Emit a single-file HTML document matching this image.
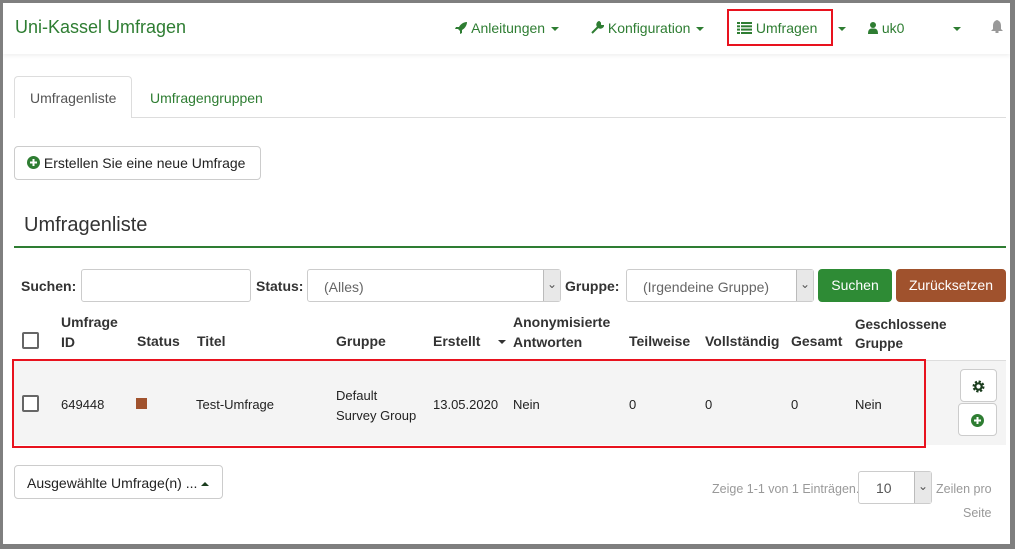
<!DOCTYPE html>
<html><head><meta charset="utf-8"><style>
*{box-sizing:border-box;margin:0;padding:0}
body{width:1015px;height:549px;background:#7f7f7f;font-family:"Liberation Sans",sans-serif;font-size:13px;color:#222;position:relative;overflow:hidden}
#pg{position:absolute;left:3px;top:3px;width:1007px;height:541px;background:#fff;overflow:hidden}
.a{position:absolute;white-space:nowrap}
.g{color:#2e7d32}
.nav{position:absolute;left:0;top:0;width:1007px;height:51px;background:#fff;box-shadow:0 2px 4px rgba(0,0,0,.06)}
.car{display:inline-block;width:0;height:0;border-left:4px solid transparent;border-right:4px solid transparent;border-top:4px solid #2e7d32;vertical-align:middle;margin-left:6px}
.tc{position:absolute;width:0;height:0;border-left:4px solid transparent;border-right:4px solid transparent;border-top:4px solid #2e7d32}
.inp{position:absolute;border:1px solid #ccc;border-radius:3px;background:#fff;height:33px}
.sel .ar{position:absolute;right:0;top:0;width:17px;height:31px;background:#e8e8e8;border-left:1px solid #bbb;font-size:12px;color:#555;text-align:center;line-height:28px}
.b{font-weight:bold;color:#333;font-size:14px}
.btn{position:absolute;border:1px solid #ccc;border-radius:4px;background:#fff}
</style></head><body>
<div id="pg">
<div class="nav">
 <div class="a g" style="left:12px;top:14px;font-size:18px">Uni-Kassel Umfragen</div>
 <div class="a g" style="left:452px;top:17px;font-size:14px"><svg width="13" height="12" viewBox="0 0 13 12" style="vertical-align:-1px"><path d="M12 0C8 0 5 3 4 5L1 5 0 7 3 7 5 9 5 12 7 11 7 8C9 7 12 4 12 0Z" fill="#2e7d32"/></svg> Anleitungen<span class="car"></span></div>
 <div class="a g" style="left:588px;top:17px;font-size:14px"><svg width="13" height="13" viewBox="0 0 13 13" style="vertical-align:-1px"><path d="M1 12L7 6M8 1a3 3 0 1 0 4 4l-2 0-1-1 0-2z" stroke="#2e7d32" stroke-width="2" fill="#2e7d32"/></svg> Konfiguration<span class="car"></span></div>
 <div class="a" style="left:724px;top:6px;width:106px;height:37px;border:2px solid #e8121e"></div>
 <div class="a g" style="left:734px;top:17px;font-size:14px"><svg width="15" height="12" viewBox="0 0 15 12" style="vertical-align:-1px"><g fill="#2e7d32"><rect x="0" y="0" width="3" height="2"/><rect x="4" y="0" width="11" height="2"/><rect x="0" y="3.3" width="3" height="2"/><rect x="4" y="3.3" width="11" height="2"/><rect x="0" y="6.6" width="3" height="2"/><rect x="4" y="6.6" width="11" height="2"/><rect x="0" y="10" width="3" height="2"/><rect x="4" y="10" width="11" height="2"/></g></svg> Umfragen</div>
 <div class="tc" style="left:835px;top:24px"></div>
 <div class="a g" style="left:865px;top:17px;font-size:14px"><svg width="10" height="12" viewBox="0 0 10 12" style="vertical-align:-1px"><circle cx="5" cy="3" r="3" fill="#2e7d32"/><path d="M0 12C0 7 2 6.5 5 6.5S10 7 10 12Z" fill="#2e7d32"/></svg> uk0</div>
 <div class="tc" style="left:950px;top:24px"></div>
 <div class="a" style="left:988px;top:17px"><svg width="12" height="13" viewBox="0 0 12 13"><path d="M6 0C3 1 2 3 2 6L2 9 0 11 12 11 10 9 10 6C10 3 9 1 6 0Z" fill="#999"/><rect x="4.5" y="11" width="3" height="2" fill="#999"/></svg></div>
</div>
<div class="a" style="left:11px;top:114px;width:992px;height:1px;background:#ddd"></div>
<div class="a" style="left:11px;top:73px;width:118px;height:42px;border:1px solid #ddd;border-bottom:none;border-radius:4px 4px 0 0;background:#fff"></div>
<div class="a" style="left:27px;top:87px;color:#555;font-size:14px">Umfragenliste</div>
<div class="a g" style="left:147px;top:87px;font-size:14px">Umfragengruppen</div>
<div class="btn" style="left:11px;top:143px;width:247px;height:34px"></div>
<div class="a" style="left:24px;top:152px;font-size:14px;color:#222"><svg width="13" height="13" viewBox="0 0 13 13" style="vertical-align:-1px"><circle cx="6.5" cy="6.5" r="6.5" fill="#2e7d32"/><path d="M6.5 3v7M3 6.5h7" stroke="#fff" stroke-width="2"/></svg> Erstellen Sie eine neue Umfrage</div>
<div class="a" style="left:21px;top:211px;font-size:20px;color:#333">Umfragenliste</div>
<div class="a" style="left:11px;top:243px;width:992px;height:2px;background:#2e7d32"></div>
<div class="a b" style="left:18px;top:275px">Suchen:</div>
<div class="inp" style="left:78px;top:266px;width:170px"></div>
<div class="a b" style="left:253px;top:275px">Status:</div>
<div class="inp sel" style="left:304px;top:266px;width:254px"><span class="a" style="left:16px;top:9px;color:#666;font-size:14px">(Alles)</span><span class="ar">&#8964;</span></div>
<div class="a b" style="left:562px;top:275px">Gruppe:</div>
<div class="inp sel" style="left:623px;top:266px;width:188px"><span class="a" style="left:16px;top:9px;color:#666;font-size:14px">(Irgendeine Gruppe)</span><span class="ar">&#8964;</span></div>
<div class="a" style="left:815px;top:266px;width:74px;height:33px;background:#2e8b35;border-radius:4px;color:#fff;font-size:14px;text-align:center;line-height:33px">Suchen</div>
<div class="a" style="left:893px;top:266px;width:110px;height:33px;background:#a0522d;border-radius:4px;color:#fff;font-size:14px;text-align:center;line-height:33px">Zurücksetzen</div>
<div class="a" style="left:19px;top:329px;width:17px;height:17px;border:2px solid #666;border-radius:2px"></div>
<div class="a b" style="left:58px;top:309px;line-height:20px">Umfrage<br>ID</div>
<div class="a b" style="left:134px;top:330px">Status</div>
<div class="a b" style="left:194px;top:330px">Titel</div>
<div class="a b" style="left:333px;top:330px">Gruppe</div>
<div class="a b" style="left:430px;top:330px">Erstellt</div>
<div class="a" style="left:495px;top:337px;border-left:4px solid transparent;border-right:4px solid transparent;border-top:4px solid #333"></div>
<div class="a b" style="left:510px;top:309px;line-height:20px">Anonymisierte<br>Antworten</div>
<div class="a b" style="left:626px;top:330px">Teilweise</div>
<div class="a b" style="left:702px;top:330px">Vollständig</div>
<div class="a b" style="left:788px;top:330px">Gesamt</div>
<div class="a b" style="left:852px;top:312px;line-height:19px;font-size:13.5px">Geschlossene<br>Gruppe</div>
<div class="a" style="left:11px;top:357px;width:992px;height:1px;background:#ddd"></div>
<div class="a" style="left:11px;top:358px;width:992px;height:84px;background:#f4f4f4"></div>
<div class="a" style="left:9px;top:356px;width:914px;height:89px;border:2px solid #e8121e"></div>
<div class="a" style="left:19px;top:392px;width:17px;height:17px;border:2px solid #666;border-radius:2px;background:#fff"></div>
<div class="a" style="left:58px;top:394px">649448</div>
<div class="a" style="left:133px;top:395px;width:11px;height:11px;background:#a0522d"></div>
<div class="a" style="left:193px;top:394px">Test-Umfrage</div>
<div class="a" style="left:333px;top:383px;line-height:20px">Default<br>Survey Group</div>
<div class="a" style="left:430px;top:394px">13.05.2020</div>
<div class="a" style="left:510px;top:394px">Nein</div>
<div class="a" style="left:626px;top:394px">0</div>
<div class="a" style="left:702px;top:394px">0</div>
<div class="a" style="left:788px;top:394px">0</div>
<div class="a" style="left:852px;top:394px">Nein</div>
<div class="btn" style="left:957px;top:366px;width:37px;height:33px;text-align:center;line-height:33px"><svg width="13" height="13" viewBox="0 0 13 13" style="vertical-align:-2px"><circle cx="6.5" cy="6.5" r="4.5" fill="none" stroke="#1b3d1e" stroke-width="3" stroke-dasharray="2 1.53"/><circle cx="6.5" cy="6.5" r="3.2" fill="none" stroke="#1b3d1e" stroke-width="2.2"/></svg></div>
<div class="btn" style="left:955px;top:400px;width:39px;height:33px;text-align:center;line-height:33px"><svg width="13" height="13" viewBox="0 0 13 13" style="vertical-align:-2px"><circle cx="6.5" cy="6.5" r="6.5" fill="#2e7d32"/><path d="M6.5 3v7M3 6.5h7" stroke="#fff" stroke-width="2"/></svg></div>
<div class="btn" style="left:11px;top:462px;width:209px;height:34px"></div>
<div class="a" style="left:24px;top:472px;font-size:14px">Ausgewählte Umfrage(n) ... <span style="display:inline-block;border-left:4px solid transparent;border-right:4px solid transparent;border-bottom:4px solid #1b3d1e;vertical-align:middle"></span></div>
<div class="a" style="left:709px;top:479px;color:#999;font-size:12.5px">Zeige 1-1 von 1 Einträgen.</div>
<div class="inp sel" style="left:855px;top:468px;width:74px"><span class="a" style="left:17px;top:8px;color:#555;font-size:14px">10</span><span class="ar">&#8964;</span></div>
<div class="a" style="left:933px;top:479px;color:#999;font-size:12.5px">Zeilen pro</div>
<div class="a" style="left:960px;top:503px;color:#999;font-size:12.5px">Seite</div>
</div>
</body></html>
